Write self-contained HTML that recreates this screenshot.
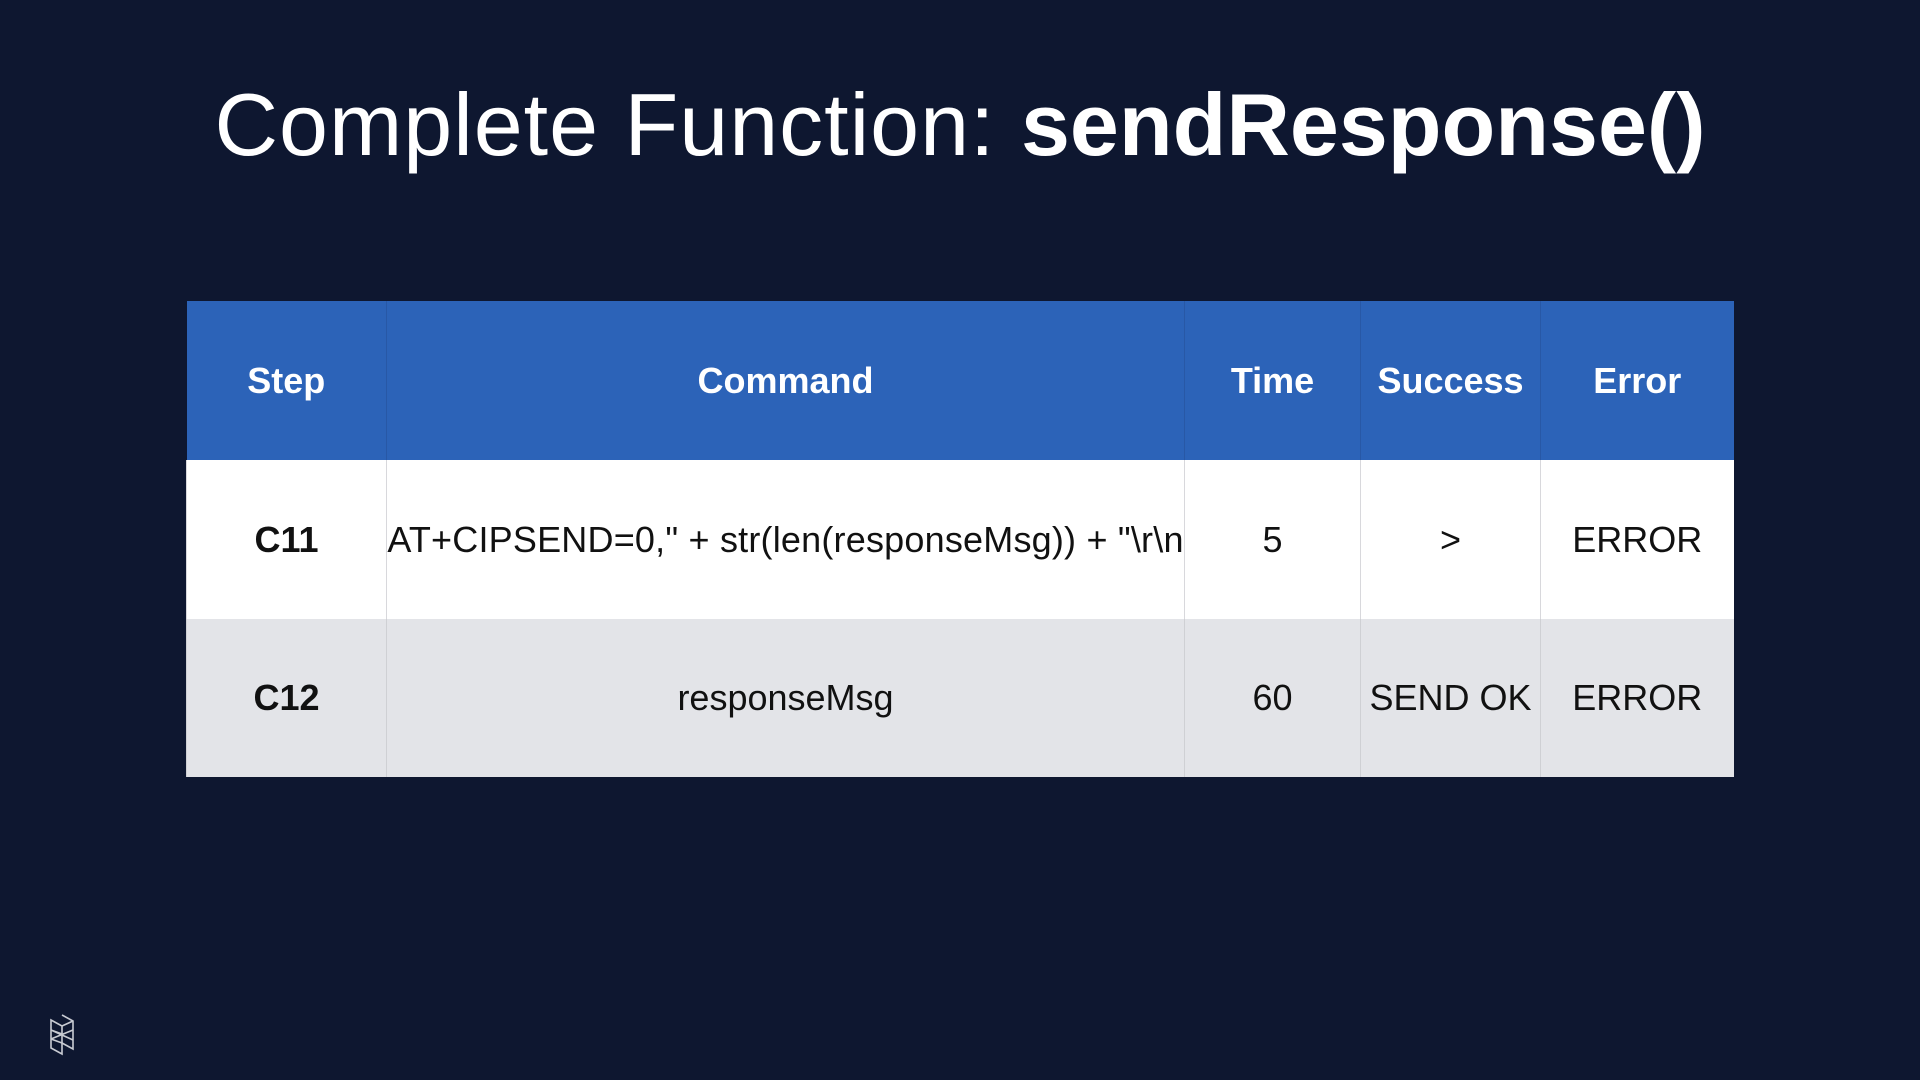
<!DOCTYPE html>
<html><head><meta charset="utf-8"><style>
html,body{margin:0;padding:0;}
body{width:1920px;height:1080px;background:#0e1730;position:relative;overflow:hidden;font-family:"Liberation Sans",sans-serif;}
h1{position:absolute;top:70px;left:0;width:1920px;text-align:center;margin:0;color:#fff;font-weight:300;font-size:88px;letter-spacing:1px;line-height:110px;}
h1 b{font-weight:700;letter-spacing:0}
table{position:absolute;left:186px;top:301px;width:1547px;border-collapse:collapse;table-layout:fixed;}
td,th{text-align:center;padding:0;white-space:nowrap;overflow:hidden;font-size:36px;}
th{background:#2c63b8;color:#fff;font-weight:700;height:159px;border-left:1px solid #2858a6;}
tr.r1 td{background:#fff;height:159px;border-left:1px solid #d8d8dc;}
tr.r2 td{background:#e3e4e8;height:158px;border-left:1px solid #cfd0d4;}
td:first-child,th:first-child{border-left:none;font-weight:700}
td{color:#111;}
</style></head><body>
<h1>Complete Function: <b>sendResponse()</b></h1>
<table>
<colgroup><col style="width:200px"><col style="width:798px"><col style="width:176px"><col style="width:180px"><col style="width:193px"></colgroup>
<tr><th>Step</th><th>Command</th><th>Time</th><th>Success</th><th>Error</th></tr>
<tr class="r1"><td>C11</td><td style="letter-spacing:0.2px">AT+CIPSEND=0," + str(len(responseMsg)) + "\r\n</td><td>5</td><td>&gt;</td><td>ERROR</td></tr>
<tr class="r2"><td>C12</td><td>responseMsg</td><td>60</td><td>SEND OK</td><td>ERROR</td></tr>
</table>
<svg style="position:absolute;left:49px;top:1012px" width="30" height="44" viewBox="0 0 30 44" fill="none" stroke="#c8cbd2" stroke-width="1.6">
<path d="M2 8 L13 14 L13 42 L2 36 Z"/>
<path d="M13 3 L24 9 L24 37 L13 31"/>
<path d="M13 14 L24 9 M2 18 L24 28 M2 27 L24 18 M13 22 L2 18 M13 31 L2 27"/>
</svg>
</body></html>
